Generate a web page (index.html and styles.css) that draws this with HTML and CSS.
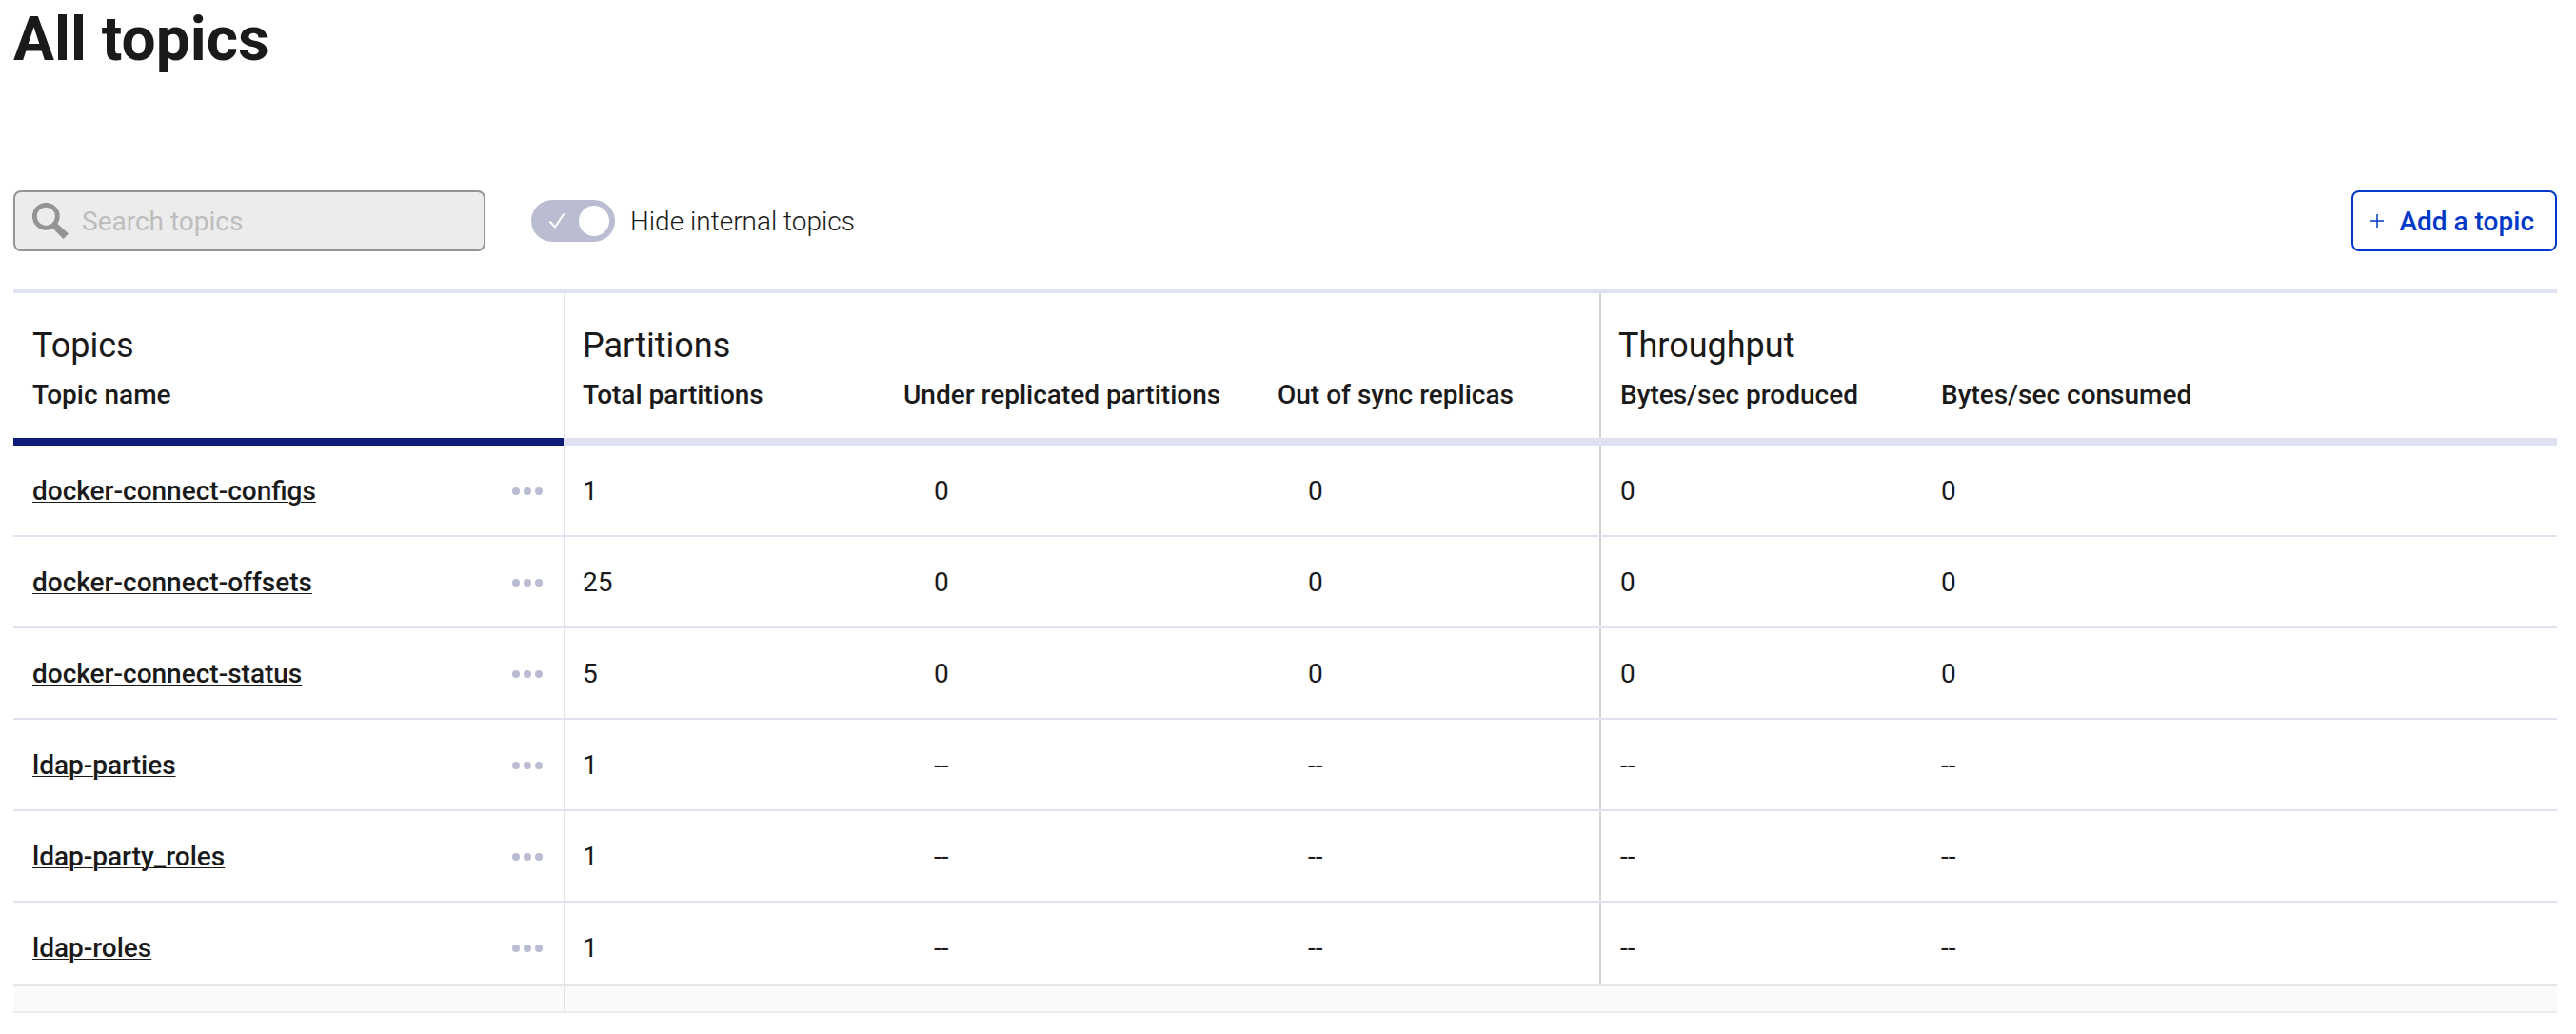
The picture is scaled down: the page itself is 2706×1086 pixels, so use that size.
FILE: index.html
```html
<!DOCTYPE html>
<html lang="en">
<head>
<meta charset="utf-8">
<meta name="viewport" content="width=device-width, initial-scale=1">
<title>All topics</title>
<link rel="stylesheet" href="styles.css">
</head>
<body>
<main class="page">
  <h1 class="page-title">All topics</h1>
  <div class="toolbar">
    <label class="search">
      <svg class="search-icon" viewBox="0 0 38 38" aria-hidden="true"><circle cx="14.300" cy="14.300" r="12" fill="none" stroke="currentColor" stroke-width="4.800"/><path d="M20 24l4-4 3 2.500L38 32.500l-5.500 5.500L21.500 27z" fill="currentColor"/></svg>
      <input class="search-input" type="text" placeholder="Search topics" aria-label="Search topics">
    </label>
    <label class="toggle">
      <input class="toggle-input" type="checkbox" checked>
      <span>Hide internal topics</span>
    </label>
    <button class="add-button" type="button">
      <svg class="add-icon" viewBox="0 0 14 14" aria-hidden="true"><path d="M7 0v14M0 7h14" fill="none" stroke="currentColor" stroke-width="1.500"/></svg>
      <span>Add a topic</span>
    </button>
  </div>
  <table class="topics">
    <colgroup>
      <col class="col-name"><col class="col-total"><col class="col-under"><col class="col-sync"><col class="col-produced"><col>
    </colgroup>
    <thead>
      <tr class="groups">
        <th scope="colgroup">Topics</th>
        <th scope="colgroup" colspan="3" class="line-blue">Partitions</th>
        <th scope="colgroup" colspan="2" class="line-gray">Throughput</th>
      </tr>
      <tr class="columns">
        <th scope="col" class="sorted">Topic name</th>
        <th scope="col" class="line-blue">Total partitions</th>
        <th scope="col">Under replicated partitions</th>
        <th scope="col">Out of sync replicas</th>
        <th scope="col" class="rate line-gray">Bytes/sec produced</th>
        <th scope="col" class="rate">Bytes/sec consumed</th>
      </tr>
    </thead>
    <tbody>
      <tr>
        <th scope="row"><div class="name"><a href="#">docker-connect-configs</a><button class="more" type="button" aria-label="More actions"><i></i><i></i><i></i></button></div></th>
        <td class="line-blue">1</td><td class="inset">0</td><td class="inset">0</td><td class="rate line-gray">0</td><td class="rate">0</td>
      </tr>
      <tr>
        <th scope="row"><div class="name"><a href="#">docker-connect-offsets</a><button class="more" type="button" aria-label="More actions"><i></i><i></i><i></i></button></div></th>
        <td class="line-blue">25</td><td class="inset">0</td><td class="inset">0</td><td class="rate line-gray">0</td><td class="rate">0</td>
      </tr>
      <tr>
        <th scope="row"><div class="name"><a href="#">docker-connect-status</a><button class="more" type="button" aria-label="More actions"><i></i><i></i><i></i></button></div></th>
        <td class="line-blue">5</td><td class="inset">0</td><td class="inset">0</td><td class="rate line-gray">0</td><td class="rate">0</td>
      </tr>
      <tr>
        <th scope="row"><div class="name"><a href="#">ldap-parties</a><button class="more" type="button" aria-label="More actions"><i></i><i></i><i></i></button></div></th>
        <td class="line-blue">1</td><td class="inset">--</td><td class="inset">--</td><td class="rate line-gray">--</td><td class="rate">--</td>
      </tr>
      <tr>
        <th scope="row"><div class="name"><a href="#">ldap-party_roles</a><button class="more" type="button" aria-label="More actions"><i></i><i></i><i></i></button></div></th>
        <td class="line-blue">1</td><td class="inset">--</td><td class="inset">--</td><td class="rate line-gray">--</td><td class="rate">--</td>
      </tr>
      <tr>
        <th scope="row"><div class="name"><a href="#">ldap-roles</a><button class="more" type="button" aria-label="More actions"><i></i><i></i><i></i></button></div></th>
        <td class="line-blue">1</td><td class="inset">--</td><td class="inset">--</td><td class="rate line-gray">--</td><td class="rate">--</td>
      </tr>
    </tbody>
    <tfoot>
      <tr><td></td><td class="foot-rest" colspan="5"></td></tr>
    </tfoot>
  </table>
</main>
</body>
</html>
```
FILE: styles.css
```css
* { box-sizing: border-box; }

body {
  margin: 0;
  background: #fff;
  color: #1a1a1a;
  font: 400 28px/32px Roboto, sans-serif;
}

button, input { font: inherit; }

.page { padding: 2px 20px 20px 14px; }

.page-title {
  margin: 0 0 118px;
  font-size: 64px;
  line-height: 80px;
  font-weight: 700;
}

.toolbar {
  display: flex;
  align-items: center;
  gap: 48px;
  margin-bottom: 40px;
}

.search {
  display: flex;
  align-items: center;
  gap: 14px;
  width: 496px;
  height: 64px;
  padding: 0 18px;
  border: 2px solid #949494;
  border-radius: 8px;
  background: #ececec;
  color: #949494;
}

.search-icon { width: 38px; height: 38px; flex: none; }

.search-input {
  flex: 1;
  min-width: 0;
  height: 60px;
  padding: 0;
  border: 0;
  outline: 0;
  background: transparent;
  color: #1a1a1a;
}

.search-input::placeholder { color: #bdbdbd; opacity: 1; }

.toggle {
  display: flex;
  align-items: center;
  gap: 16px;
  font-weight: 300;
}

.toggle span, .add-button span { padding-top: 2px; }

.toggle-input {
  appearance: none;
  display: flex;
  justify-content: space-between;
  align-items: center;
  width: 88px;
  height: 44px;
  margin: 0;
  padding: 0 6px 0 18px;
  border-radius: 22px;
  background: #babdd2;
}

.toggle-input::before {
  content: "";
  width: 18px;
  height: 16px;
  background: url("data:image/svg+xml,%3Csvg xmlns='http://www.w3.org/2000/svg' viewBox='0 0 18 16'%3E%3Cpath d='M1.500 8.500l5.500 6L16.500.5' fill='none' stroke='white' stroke-width='2'/%3E%3C/svg%3E") no-repeat;
}

.toggle-input::after {
  content: "";
  width: 32px;
  height: 32px;
  border-radius: 50%;
  background: #fff;
}

.add-button {
  display: flex;
  align-items: center;
  gap: 16px;
  height: 64px;
  margin-left: auto;
  padding: 0 22px 0 18px;
  border: 2px solid #0039c8;
  border-radius: 8px;
  background: #fff;
  color: #0039c8;
  font-weight: 500;
}

.add-icon { width: 14px; height: 14px; }

.topics {
  width: 100%;
  table-layout: fixed;
  border-spacing: 0;
  border-top: 4px solid #dfe2f0;
}

.col-name { width: 578px; }
.col-total { width: 337px; }
.col-under { width: 393px; }
.col-sync { width: 358px; }
.col-produced { width: 337px; }

.topics th, .topics td {
  padding: 32px 20px 30px;
  border-bottom: 2px solid #dfe2f0;
  text-align: left;
  font-weight: 400;
  white-space: nowrap;
}

.topics .groups th {
  padding: 34px 20px 0;
  border: 0;
  font-size: 36px;
  line-height: 42px;
}

.topics .columns th {
  padding-top: 15px;
  padding-bottom: 29px;
  border-bottom-width: 8px;
  font-weight: 500;
}

.topics .columns .sorted { border-bottom-color: #0d1c78; }

.topics .line-blue { box-shadow: inset 2px 0 #dfe2f0; }
.topics .line-gray { box-shadow: inset 2px 0 #d3d3d3; }

.topics .inset { padding-left: 52px; }
.topics .rate { padding-left: 22px; }

.topics tbody tr:last-child > * {
  padding-bottom: 22px;
  border-bottom: 0;
}

.name {
  display: flex;
  justify-content: space-between;
  align-items: center;
  padding-right: 2px;
}

.name a {
  color: inherit;
  font-weight: 500;
  text-decoration: underline 1px;
  text-underline-offset: 2px;
}

.more {
  display: flex;
  gap: 4px;
  padding: 0;
  border: 0;
  background: none;
}

.more i {
  width: 8px;
  height: 8px;
  border-radius: 50%;
  background: #babdd2;
}

.topics tfoot td {
  height: 30px;
  padding: 0;
  border-top: 2px solid #e6e6e6;
  border-bottom: 2px solid #ececec;
  background: #fafafa;
}

.topics tfoot .foot-rest { border-left: 2px solid #dfe2f0; }
```
